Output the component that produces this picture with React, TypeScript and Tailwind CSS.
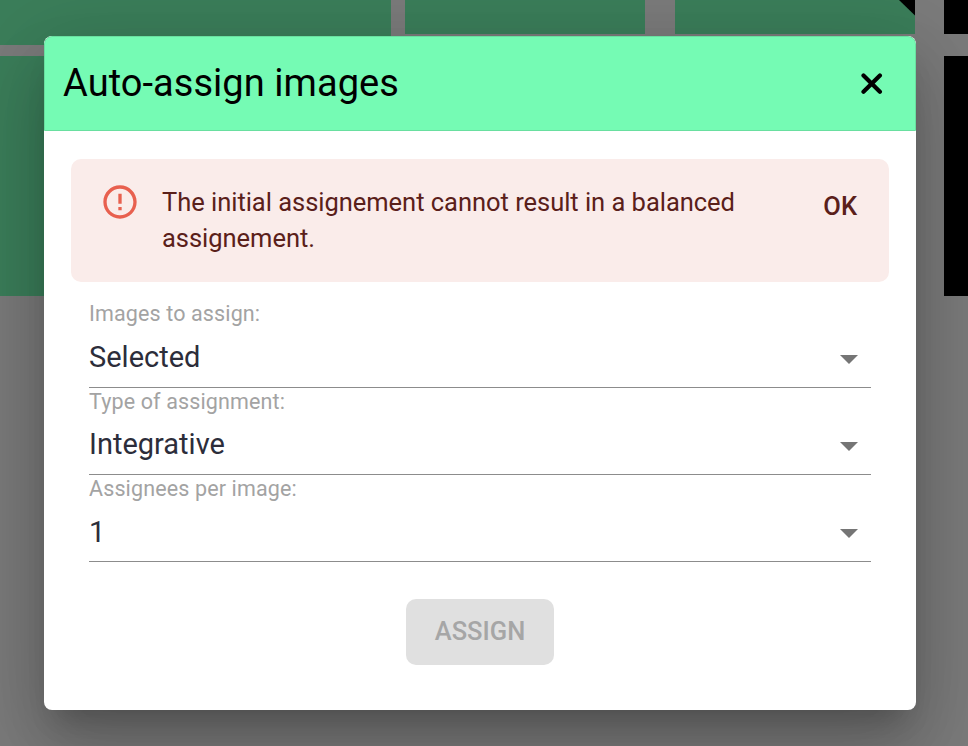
const fields = [
  { label: 'Images to assign:', value: 'Selected', labelClass: 'mt-0', valueClass: '-mt-[1px]' },
  { label: 'Type of assignment:', value: 'Integrative', labelClass: 'mt-[1px]', valueClass: '-mt-[1px]' },
  { label: 'Assignees per image:', value: '1', labelClass: 'mt-[1px]', valueClass: 'mt-0' },
];

function Backdrop() {
  return (
    <div className="absolute inset-0 bg-[#7b7b7b]">
      <div className="flex items-start">
        <div className="flex w-[391px] shrink-0 flex-col gap-[11px]">
          <div className="h-[45px] bg-[#3b7e5a]" />
          <div className="h-[240px] bg-[#3b7e5a]" />
        </div>
        <div className="ml-[14px] h-[34px] w-[240px] shrink-0 bg-[#3b7e5a]" />
        <div className="ml-[30px] h-[34px] w-[240px] shrink-0 bg-[#3b7e5a]">
          <svg className="ml-auto block" width="18" height="16" viewBox="0 0 18 16">
            <path d="M2 0H18V15.5Z" fill="#000" />
          </svg>
        </div>
        <div className="ml-[29px] flex w-[24px] shrink-0 flex-col gap-[22px]">
          <div className="h-[34px] bg-black" />
          <div className="h-[240px] bg-black" />
        </div>
      </div>
    </div>
  );
}

export default function App() {
  return (
    <div className="relative h-[746px] w-[968px] overflow-hidden font-['Roboto',sans-serif]">
      <Backdrop />
      <div className="absolute left-[44px] top-[36px] flex h-[674px] w-[872px] flex-col overflow-hidden rounded-[8px] bg-white shadow-[0px_20px_27px_-13px_rgba(0,0,0,0.2),0px_44px_69px_5px_rgba(0,0,0,0.14),0px_16px_84px_15px_rgba(0,0,0,0.12)]">
        <header className="flex h-[95px] shrink-0 items-center justify-between rounded-t-[8px] border border-[#69dfa0] bg-[#75fbb4] pl-[18px] pr-[32px]">
          <h2 className="-mt-[2px] whitespace-nowrap text-[38px] leading-[48px] tracking-[0.05px] text-black">Auto-assign images</h2>
          <svg width="22" height="22" viewBox="0 0 22 22" fill="none" stroke="#000" strokeWidth="4.2" strokeLinecap="round">
            <path d="M2.5 2.4L18.9 18.8M18.9 2.4L2.5 18.8" />
          </svg>
        </header>
        <div className="mx-[27px] mt-[28px] flex h-[123px] shrink-0 items-start rounded-[10px] bg-[#faecea] text-[#5a201a]">
          <svg className="ml-[29px] mt-[23px] shrink-0" width="40" height="40" viewBox="0 0 24 24" fill="#e8604f">
            <path d="M11 15h2v2h-2zm0-8h2v6h-2zm.99-5C6.47 2 2 6.48 2 12s4.47 10 9.99 10C17.52 22 22 17.52 22 12S17.52 2 11.99 2zM12 20c-4.42 0-8-3.58-8-8s3.58-8 8-8 8 3.58 8 8-3.58 8-8 8z" />
          </svg>
          <p className="ml-[22px] mt-[25px] w-[600px] text-[25.5px] leading-[36px] tracking-[-0.03px]">
            The initial assignement cannot result in a balanced assignement.
          </p>
          <button className="ml-auto mr-[32px] mt-[28px] text-[25.5px] font-medium leading-[38px]">OK</button>
        </div>
        <div className="mx-[45px] mt-[19px] flex flex-col">
          {fields.map((f) => (
            <div key={f.label} className="flex h-[87px] flex-col border-b border-[#8c8c8c]">
              <span className={`h-[26px] text-[21.5px] leading-[26px] tracking-[0.13px] text-[#a3a3a3] ${f.labelClass}`}>{f.label}</span>
              <div className="mb-[11px] mt-auto flex h-[36px] items-start justify-between pr-[13px]">
                <span className={`text-[29px] leading-[36px] text-[#2c2d3a] ${f.valueClass}`}>{f.value}</span>
                <svg className="mt-[15px]" width="18" height="9" viewBox="0 0 18 9">
                  <path d="M0 0H18L9 9Z" fill="#757575" />
                </svg>
              </div>
            </div>
          ))}
        </div>
        <button className="mx-auto mt-[37px] h-[66px] w-[148px] shrink-0 rounded-[10px] bg-[#e0e0e0] pb-[2px] text-[25.5px] font-medium leading-[36px] text-[#a6a6a6]">
          ASSIGN
        </button>
      </div>
    </div>
  );
}
